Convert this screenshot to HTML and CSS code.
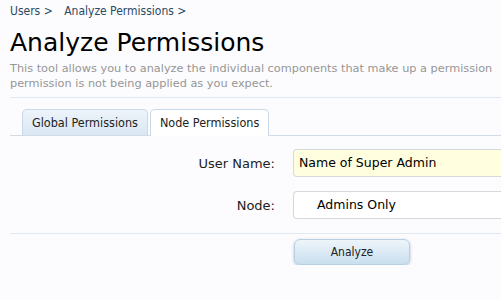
FILE: index.html
```html
<!DOCTYPE html>
<html lang="en">
<head>
    <meta charset="UTF-8">
    <title>Analyze Permissions</title>
    <link rel="stylesheet" href="styles.css">
</head>
<body>
    <div class="breadcrumb">
        <span class="crumb">Users &gt;</span>
        <span class="crumb">Analyze Permissions &gt;</span>
    </div>

    <h1 class="title">Analyze Permissions</h1>
    <p class="description">This tool allows you to analyze the individual components that make up a permission<br>permission is not being applied as you expect.</p>

    <div class="tabs">
        <span class="tab">Global Permissions</span>
        <span class="tab active">Node Permissions</span>
    </div>

    <div class="form">
        <div class="row">
            <label class="label">User Name:</label>
            <div class="input text-input">Name of Super Admin</div>
        </div>
        <div class="row">
            <label class="label">Node:</label>
            <div class="input select">Admins Only</div>
        </div>
        <div class="submit-row">
            <button class="button">Analyze</button>
        </div>
    </div>
</body>
</html>
```

FILE: styles.css
```css
body {
    margin: 0;
    padding: 0 0 0 10px;
    background-color: #fcfcfe;
    font-family: "DejaVu Sans Condensed", "DejaVu Sans", sans-serif;
    font-size: 11px;
    color: #333;
    overflow: hidden;
    width: 491px;
}
.breadcrumb {
    height: 22px;
    padding-top: 4px;
    font-size: 12px;
    color: #2b4a63;
    white-space: nowrap;
}
.crumb {
    margin-right: 8px;
}
.title {
    margin: 1px 0 0 0;
    font-family: "DejaVu Sans", sans-serif;
    font-weight: normal;
    font-size: 25px;
    line-height: 32px;
    color: #000;
}
.description {
    margin: 0;
    padding-top: 2px;
    font-family: "DejaVu Sans", sans-serif;
    font-size: 11.3px;
    line-height: 15px;
    color: #969696;
    height: 36px;
    white-space: nowrap;
}
.tabs {
    border-top: 1px solid #e0e8f1;
    padding: 11px 0 0 12px;
    border-bottom: 1px solid #cfdbe7;
    display: flex;
    height: 26px;
}
.tab {
    display: block;
    height: 25px;
    line-height: 25px;
    padding: 0 9px;
    margin-right: 2px;
    border: 1px solid #c9d8e6;
    border-bottom: none;
    border-radius: 5px 5px 0 0;
    background: linear-gradient(#eef4fa, #d9e7f3);
    font-size: 12.5px;
    color: #222;
}
.tab.active {
    background: #fff;
    height: 26px;
    margin-bottom: -1px;
}
.form {
    padding-top: 13px;
}
.row {
    display: flex;
    align-items: center;
    margin-bottom: 14px;
}
.label {
    width: 265px;
    text-align: right;
    font-family: "DejaVu Sans", sans-serif;
    font-size: 13px;
    color: #222;
}
.input {
    margin-left: 18px;
    flex: 1;
    height: 26px;
    line-height: 26px;
    border: 1px solid #d4d9de;
    border-right: none;
    border-radius: 4px 0 0 4px;
    font-family: "DejaVu Sans", sans-serif;
    font-size: 12.5px;
    color: #000;
    white-space: nowrap;
}
.text-input {
    background: #ffffdf;
    padding-left: 5px;
}
.select {
    background: #fff;
    padding-left: 23px;
}
.submit-row {
    border-top: 1px solid #dfe9f3;
    padding: 5px 0 0 284px;
}
.button {
    width: 116px;
    height: 26px;
    border: 1px solid #b9cfe0;
    border-radius: 6px;
    background: linear-gradient(#eef5fb, #c9dfee);
    box-shadow: 0 1px 3px rgba(80, 110, 140, 0.45);
    font-family: "DejaVu Sans Condensed", "DejaVu Sans", sans-serif;
    font-size: 12px;
    color: #222;
    cursor: pointer;
}
```
